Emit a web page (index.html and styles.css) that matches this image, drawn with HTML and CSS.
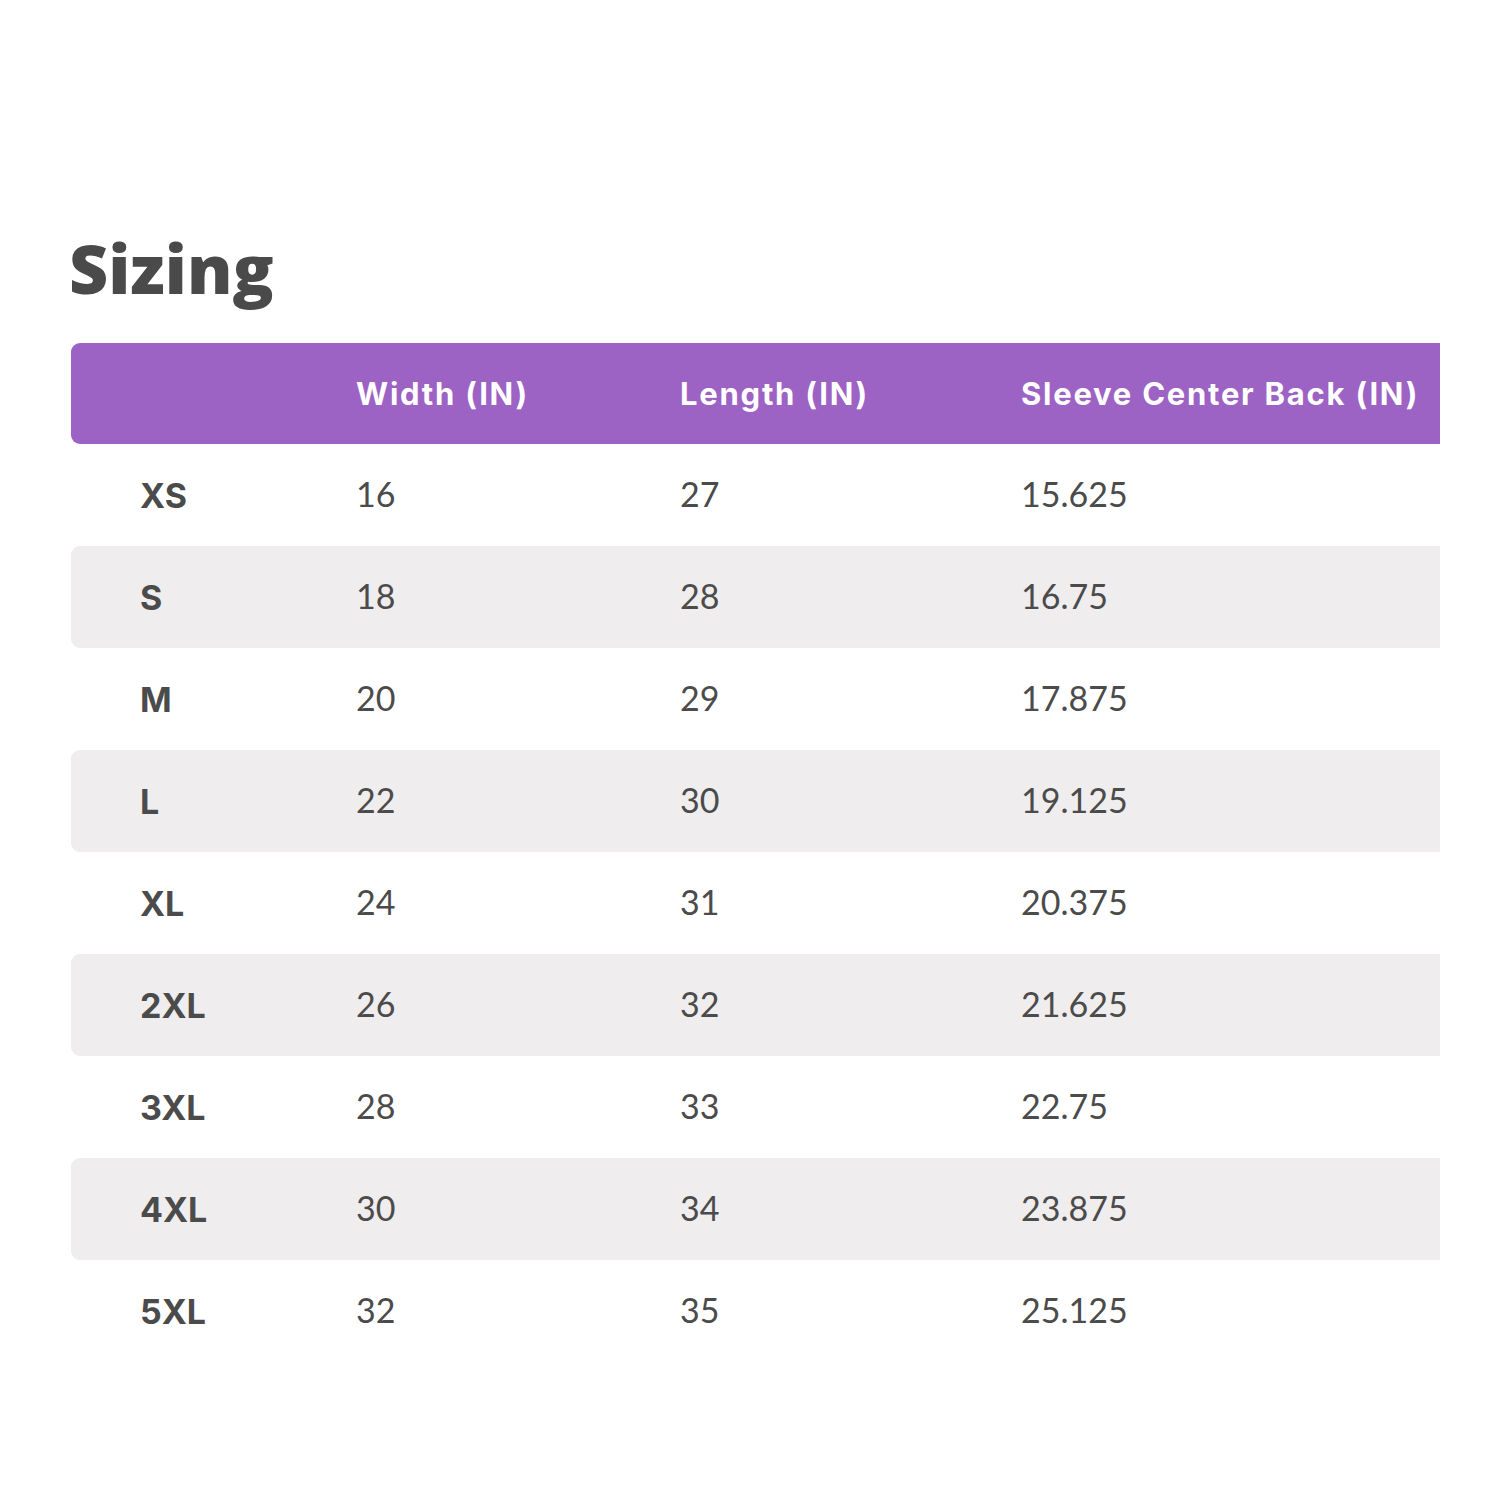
FILE: index.html
```html
<!DOCTYPE html>
<html>
<head>
<meta charset="utf-8">
<link rel="stylesheet" href="styles.css">
</head>
<body>
<main class="page">
  <h1 class="title">Sizing</h1>
  <div class="table">
    <div class="row head">
      <div class="cell"></div>
      <div class="cell">Width (IN)</div>
      <div class="cell">Length (IN)</div>
      <div class="cell">Sleeve Center Back (IN)</div>
    </div>
    <div class="row"><div class="cell size">XS</div><div class="cell">16</div><div class="cell">27</div><div class="cell">15.625</div></div>
    <div class="row alt"><div class="cell size">S</div><div class="cell">18</div><div class="cell">28</div><div class="cell">16.75</div></div>
    <div class="row"><div class="cell size">M</div><div class="cell">20</div><div class="cell">29</div><div class="cell">17.875</div></div>
    <div class="row alt"><div class="cell size">L</div><div class="cell">22</div><div class="cell">30</div><div class="cell">19.125</div></div>
    <div class="row"><div class="cell size">XL</div><div class="cell">24</div><div class="cell">31</div><div class="cell">20.375</div></div>
    <div class="row alt"><div class="cell size">2XL</div><div class="cell">26</div><div class="cell">32</div><div class="cell">21.625</div></div>
    <div class="row"><div class="cell size">3XL</div><div class="cell">28</div><div class="cell">33</div><div class="cell">22.75</div></div>
    <div class="row alt"><div class="cell size">4XL</div><div class="cell">30</div><div class="cell">34</div><div class="cell">23.875</div></div>
    <div class="row"><div class="cell size">5XL</div><div class="cell">32</div><div class="cell">35</div><div class="cell">25.125</div></div>
  </div>
</main>
</body>
</html>
```

FILE: styles.css
```css
html, body {
  margin: 0;
  padding: 0;
  background: #ffffff;
}
body {
  font-family: "Lato", "Open Sans", sans-serif;
  color: #4b4b4b;
}
.page {
  width: 1500px;
  height: 1500px;
  padding: 228px 60px 0 71px;
  box-sizing: border-box;
}
.title {
  margin: 0 0 0 -2px;
  font-family: "Open Sans", "Lato", sans-serif;
  font-size: 68px;
  line-height: 80px;
  font-weight: 800;
  color: #4a4a4a;
}
.table {
  margin-top: 35px;
  width: 1369px;
  display: flex;
  flex-direction: column;
}
.row {
  display: grid;
  grid-template-columns: 216px 324px 341px 1fr;
  padding-left: 69px;
  padding-bottom: 3px;
  box-sizing: border-box;
  height: 102px;
  align-items: center;
  font-size: 34px;
}
.row.head {
  height: 101px;
  padding-bottom: 0;
  background: #9c62c4;
  color: #ffffff;
  font-family: "Inter", "Open Sans", sans-serif;
  font-weight: 700;
  font-size: 31px;
  letter-spacing: 1.75px;
  border-radius: 9px 0 0 9px;
}
.row.alt {
  background: #efeded;
  border-radius: 9px 0 0 9px;
}
.cell.size {
  padding-top: 4px;
  font-family: "Inter", "Open Sans", sans-serif;
  font-weight: 700;
  font-size: 34px;
}
```
